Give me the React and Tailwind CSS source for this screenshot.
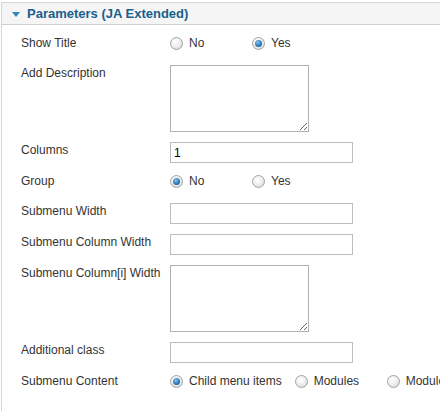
import React from "react";

function Radio({ checked }) {
  return (
    <span className="relative inline-block w-[13px] h-[13px] shrink-0 rounded-full border border-[#a3a3a3] bg-[radial-gradient(circle_at_40%_35%,#ffffff_0%,#f0f0f0_45%,#cfcfcf_100%)]">
      {checked && (
        <span className="absolute left-[2px] top-[2px] w-[7px] h-[7px] rounded-full bg-[radial-gradient(circle_at_40%_35%,#8cc6ee_0%,#2f7fbf_50%,#164f7e_100%)]" />
      )}
    </span>
  );
}

function Option({ checked, label, labelClass = "" }) {
  return (
    <span className="inline-flex items-center shrink-0">
      <Radio checked={checked} />
      <span className={"ml-[6px] " + labelClass}>{label}</span>
    </span>
  );
}

function Row({ label, children }) {
  return (
    <div className="flex items-start">
      <div className="w-[168px] shrink-0 pl-[19px] pt-[1px] leading-[14px] whitespace-nowrap">{label}</div>
      <div className="flex-1 min-w-0">{children}</div>
    </div>
  );
}

function Radios({ children }) {
  return (
    <div className="h-[20px] pt-[1px]">
      <div className="h-[14px] leading-[14px] flex items-center whitespace-nowrap">{children}</div>
    </div>
  );
}

function TextInput({ value = "" }) {
  return (
    <input
      readOnly
      value={value}
      className="block w-[183px] h-[21px] border border-[#bdbdbd] bg-white px-[3px] text-[12px] text-black outline-none"
      style={{ fontFamily: "'Liberation Sans', Arial, sans-serif" }}
    />
  );
}

function Area() {
  return (
    <textarea
      readOnly
      className="block w-[139px] h-[67px] border border-[#b0b0b0] bg-white outline-none resize"
    />
  );
}

export default function App() {
  return (
    <div
      className="w-[440px] h-[411px] overflow-hidden bg-white text-[12px] text-[#333]"
      style={{ fontFamily: "'Liberation Sans', Arial, sans-serif" }}
    >
      <div className="mt-[2px] ml-[1px] h-[409px] border-l border-t border-[#d6d6d6]">
        <div className="h-[22px] flex items-center border-b border-[#cfcfcf] bg-[#f5f5f5]">
          <svg width="8" height="5" viewBox="0 0 8 5" className="ml-[10px] mt-[1px]">
            <polygon points="0,0 8,0 4,5" fill="#2d87bd" />
          </svg>
          <span className="ml-[7px] pt-[1px] text-[13px] font-bold text-[#1a5f8c] leading-[20px]">
            Parameters (JA Extended)
          </span>
        </div>

        <div className="pt-[10px] flex flex-col gap-[10px]">
          <Row label="Show Title">
            <Radios>
              <Option label="No" labelClass="w-[63px]" />
              <Option checked label="Yes" />
            </Radios>
          </Row>
          <Row label="Add Description">
            <Area />
          </Row>
          <Row label="Columns">
            <TextInput value="1" />
          </Row>
          <Row label="Group">
            <Radios>
              <Option checked label="No" labelClass="w-[63px]" />
              <Option label="Yes" />
            </Radios>
          </Row>
          <Row label="Submenu Width">
            <TextInput />
          </Row>
          <Row label="Submenu Column Width">
            <TextInput />
          </Row>
          <Row label="Submenu Column[i] Width">
            <Area />
          </Row>
          <Row label="Additional class">
            <TextInput />
          </Row>
          <Row label="Submenu Content">
            <Radios>
              <Option checked label="Child menu items" labelClass="mr-[13px]" />
              <Option label="Modules" labelClass="w-[73px]" />
              <Option label="Module positions" />
            </Radios>
          </Row>
        </div>
      </div>
    </div>
  );
}
